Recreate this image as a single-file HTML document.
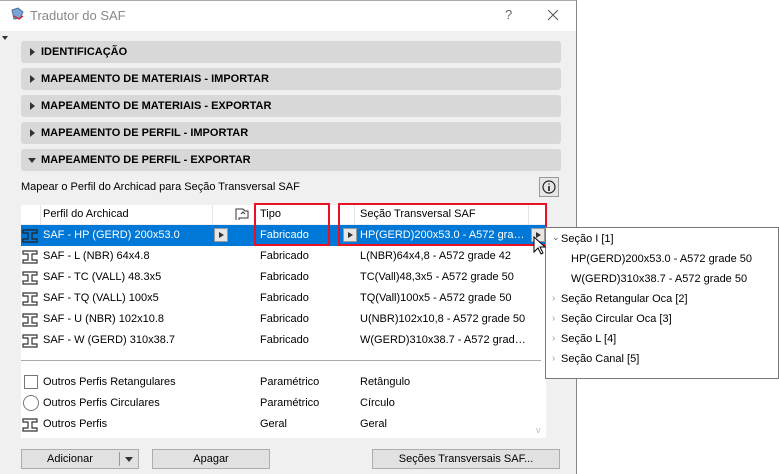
<!DOCTYPE html><html><head><style>
*{margin:0;padding:0;box-sizing:border-box}
body{width:779px;height:474px;background:#fff;font-family:"Liberation Sans",sans-serif;font-size:11px;color:#000;position:relative;overflow:hidden}
.a{position:absolute;white-space:nowrap}
.bar{position:absolute;left:21px;width:540px;height:22px;background:#d8d8d8;border-radius:3px;font-weight:bold;font-size:11px;line-height:22px;padding-left:20px}
.bar:before{content:"";position:absolute;left:9px;top:7px;border-left:5px solid #333;border-top:4px solid transparent;border-bottom:4px solid transparent}
.bar.open:before{left:7px;top:9px;border-top:5px solid #333;border-left:4px solid transparent;border-right:4px solid transparent;border-bottom:0}
.row{position:absolute;left:21px;width:525px;height:21px;line-height:21px}
.ib{position:absolute;width:14px;height:14px;border:1px solid #999;background:#e6e6e6}
.ib:after{content:"";position:absolute;left:4px;top:3px;border-left:5px solid #333;border-top:3.5px solid transparent;border-bottom:3.5px solid transparent}
.btn{position:absolute;top:449px;height:20px;background:#e1e1e1;border:1px solid #adadad;text-align:center;line-height:18px}
.t{overflow:hidden;text-overflow:ellipsis;width:168px}
</style></head><body>
<div class="a" style="left:0;top:0;width:577px;height:474px;background:#f0f0f0;border-right:1px solid #888;border-top:1px solid #aaa"></div>
<div class="a" style="left:0;top:1px;width:576px;height:30px;background:#fff"></div>
<svg class="a" style="left:9px;top:7px" width="16" height="16"><path d="M3 3l6-2 5 4-3 6-6 1z" fill="#7aa3d6" stroke="#4a6fa0"/><path d="M5 9l5 3 4-3" fill="none" stroke="#c33" stroke-width="1.5"/></svg>
<div class="a" style="left:30px;top:8px;font-size:13px;color:#888">Tradutor do SAF</div>
<div class="a" style="left:505px;top:7px;font-size:13px;color:#666">?</div>
<svg class="a" style="left:547px;top:9px" width="12" height="12"><path d="M1 1l10 10M11 1L1 11" stroke="#555"/></svg>
<div class="a" style="left:2px;top:36px;border-top:4px solid #333;border-left:3px solid transparent;border-right:3px solid transparent"></div>
<div class="bar" style="top:41px">IDENTIFICAÇÃO</div>
<div class="bar" style="top:68px">MAPEAMENTO DE MATERIAIS - IMPORTAR</div>
<div class="bar" style="top:95px">MAPEAMENTO DE MATERIAIS - EXPORTAR</div>
<div class="bar" style="top:122px">MAPEAMENTO DE PERFIL - IMPORTAR</div>
<div class="bar open" style="top:149px">MAPEAMENTO DE PERFIL - EXPORTAR</div>
<div class="a" style="left:21px;top:181px">Mapear o Perfil do Archicad para Seção Transversal SAF</div>
<div class="a" style="left:539px;top:177px;width:20px;height:20px;border:1px solid #999;background:#e6e6e6"><svg width="18" height="18"><circle cx="9" cy="9" r="6" fill="none" stroke="#222" stroke-width="1.2"/><path d="M9 8v5M9 5.5v1" stroke="#222" stroke-width="1.6"/></svg></div>
<div class="a" style="left:21px;top:205px;width:525px;height:233px;background:#fff"></div>
<div class="a" style="left:21px;top:205px;width:525px;height:20px;border-bottom:1px solid #eee"></div>
<div class="a" style="left:212px;top:205px;width:1px;height:20px;background:#e5e5e5"></div>
<div class="a" style="left:254px;top:205px;width:1px;height:20px;background:#e5e5e5"></div>
<div class="a" style="left:354px;top:205px;width:1px;height:20px;background:#e5e5e5"></div>
<div class="a" style="left:528px;top:205px;width:1px;height:20px;background:#e5e5e5"></div>
<div class="a" style="left:40px;top:205px;width:1px;height:20px;background:#e5e5e5"></div>
<div class="a" style="left:43px;top:208px">Perfil do Archicad</div>
<svg class="a" style="left:235px;top:207px" width="14" height="14"><path d="M1 13V2h7l2 2h3v7H4v2" fill="none" stroke="#333"/><path d="M6 7l2-2 2 2" fill="none" stroke="#333"/></svg>
<div class="a" style="left:260px;top:208px">Tipo</div>
<div class="a" style="left:360px;top:208px">Seção Transversal SAF</div>
<div class="row" style="top:225px;background:#0078d7;color:#fff"></div>
<div id="rows"></div>
<div class="a" style="left:21px;top:360px;width:520px;height:1px;background:#aaa"></div>
<div class="a" style="left:24px;top:375px;width:14px;height:14px;border:1px solid #777"></div>
<div class="a" style="left:23px;top:395px;width:16px;height:16px;border:1px solid #777;border-radius:50%"></div>
<div class="a" style="left:43px;top:376px">Outros Perfis Retangulares</div>
<div class="a" style="left:43px;top:397px">Outros Perfis Circulares</div>
<div class="a" style="left:43px;top:418px">Outros Perfis</div>
<div class="a" style="left:260px;top:376px">Paramétrico</div><div class="a" style="left:260px;top:397px">Paramétrico</div><div class="a" style="left:260px;top:418px">Geral</div>
<div class="a" style="left:360px;top:376px">Retângulo</div><div class="a" style="left:360px;top:397px">Círculo</div><div class="a" style="left:360px;top:418px">Geral</div>
<div class="a" style="left:536px;top:425px;color:#bbb;font-size:9px">v</div>
<div class="btn" style="left:21px;width:118px;text-align:left;padding-left:25px">Adicionar<span style="position:absolute;left:97px;top:2px;width:1px;height:14px;background:#999"></span><span style="position:absolute;left:103px;top:7px;border-top:5px solid #333;border-left:4px solid transparent;border-right:4px solid transparent"></span></div>
<div class="btn" style="left:152px;width:118px">Apagar</div>
<div class="btn" style="left:372px;width:188px">Seções Transversais SAF...</div>
<div class="a" style="left:254px;top:203px;width:76px;height:43px;border:2px solid #e81123"></div>
<div class="a" style="left:338px;top:203px;width:209px;height:43px;border:2px solid #e81123"></div>
<div class="a" style="left:545px;top:227px;width:234px;height:152px;background:#fff;border:1px solid #777"></div>
<div class="a" style="left:552px;top:232px;font-size:9px;color:#555">⌄</div>
<div class="a" style="left:561px;top:233px">Seção I [1]</div>
<div class="a" style="left:571px;top:253px">HP(GERD)200x53.0 - A572 grade 50</div>
<div class="a" style="left:571px;top:273px">W(GERD)310x38.7 - A572 grade 50</div>
<div class="a" style="left:552px;top:293px;color:#999;font-size:10px">›</div><div class="a" style="left:561px;top:293px">Seção Retangular Oca [2]</div>
<div class="a" style="left:552px;top:313px;color:#999;font-size:10px">›</div><div class="a" style="left:561px;top:313px">Seção Circular Oca [3]</div>
<div class="a" style="left:552px;top:333px;color:#999;font-size:10px">›</div><div class="a" style="left:561px;top:333px">Seção L [4]</div>
<div class="a" style="left:552px;top:353px;color:#999;font-size:10px">›</div><div class="a" style="left:561px;top:353px">Seção Canal [5]</div>
<svg class="a" style="left:533px;top:236px" width="14" height="22"><path d="M1 1v15l4-4 3 6 2-1-3-6h5z" fill="#fff" stroke="#000"/></svg>
<script>
var d=[["SAF - HP (GERD) 200x53.0","HP(GERD)200x53.0 - A572 grade 50"],["SAF - L (NBR) 64x4.8","L(NBR)64x4,8 - A572 grade 42"],["SAF - TC (VALL) 48.3x5","TC(Vall)48,3x5 - A572 grade 50"],["SAF - TQ (VALL) 100x5","TQ(Vall)100x5 - A572 grade 50"],["SAF - U (NBR) 102x10.8","U(NBR)102x10,8 - A572 grade 50"],["SAF - W (GERD) 310x38.7","W(GERD)310x38.7 - A572 grade 50"]];
var h="";function ic(x,y,c){return '<svg class="a" style="left:'+x+'px;top:'+y+'px" width="16" height="14"><path d="M1 1h14v3h-5v6h5v3H1v-3h5V4H1z" fill="none" stroke="'+c+'" stroke-width="1.2"/></svg>';}
d.forEach(function(r,i){var y=225+21*i,c=i?"#000":"#fff";h+=ic(22,y+4,i?"#333":"#222");h+='<div class="a" style="left:43px;top:'+(y+4)+'px;color:'+c+'">'+r[0]+'</div><div class="a" style="left:260px;top:'+(y+4)+'px;color:'+c+'">Fabricado</div><div class="a t" style="left:360px;top:'+(y+4)+'px;color:'+c+'">'+r[1]+'</div>';});
h+=ic(22,418,"#333");
h+='<div class="ib" style="left:214px;top:228px"></div><div class="ib" style="left:343px;top:228px"></div><div class="ib" style="left:531px;top:228px"></div>';
document.getElementById("rows").innerHTML=h;
</script>
</body></html>
